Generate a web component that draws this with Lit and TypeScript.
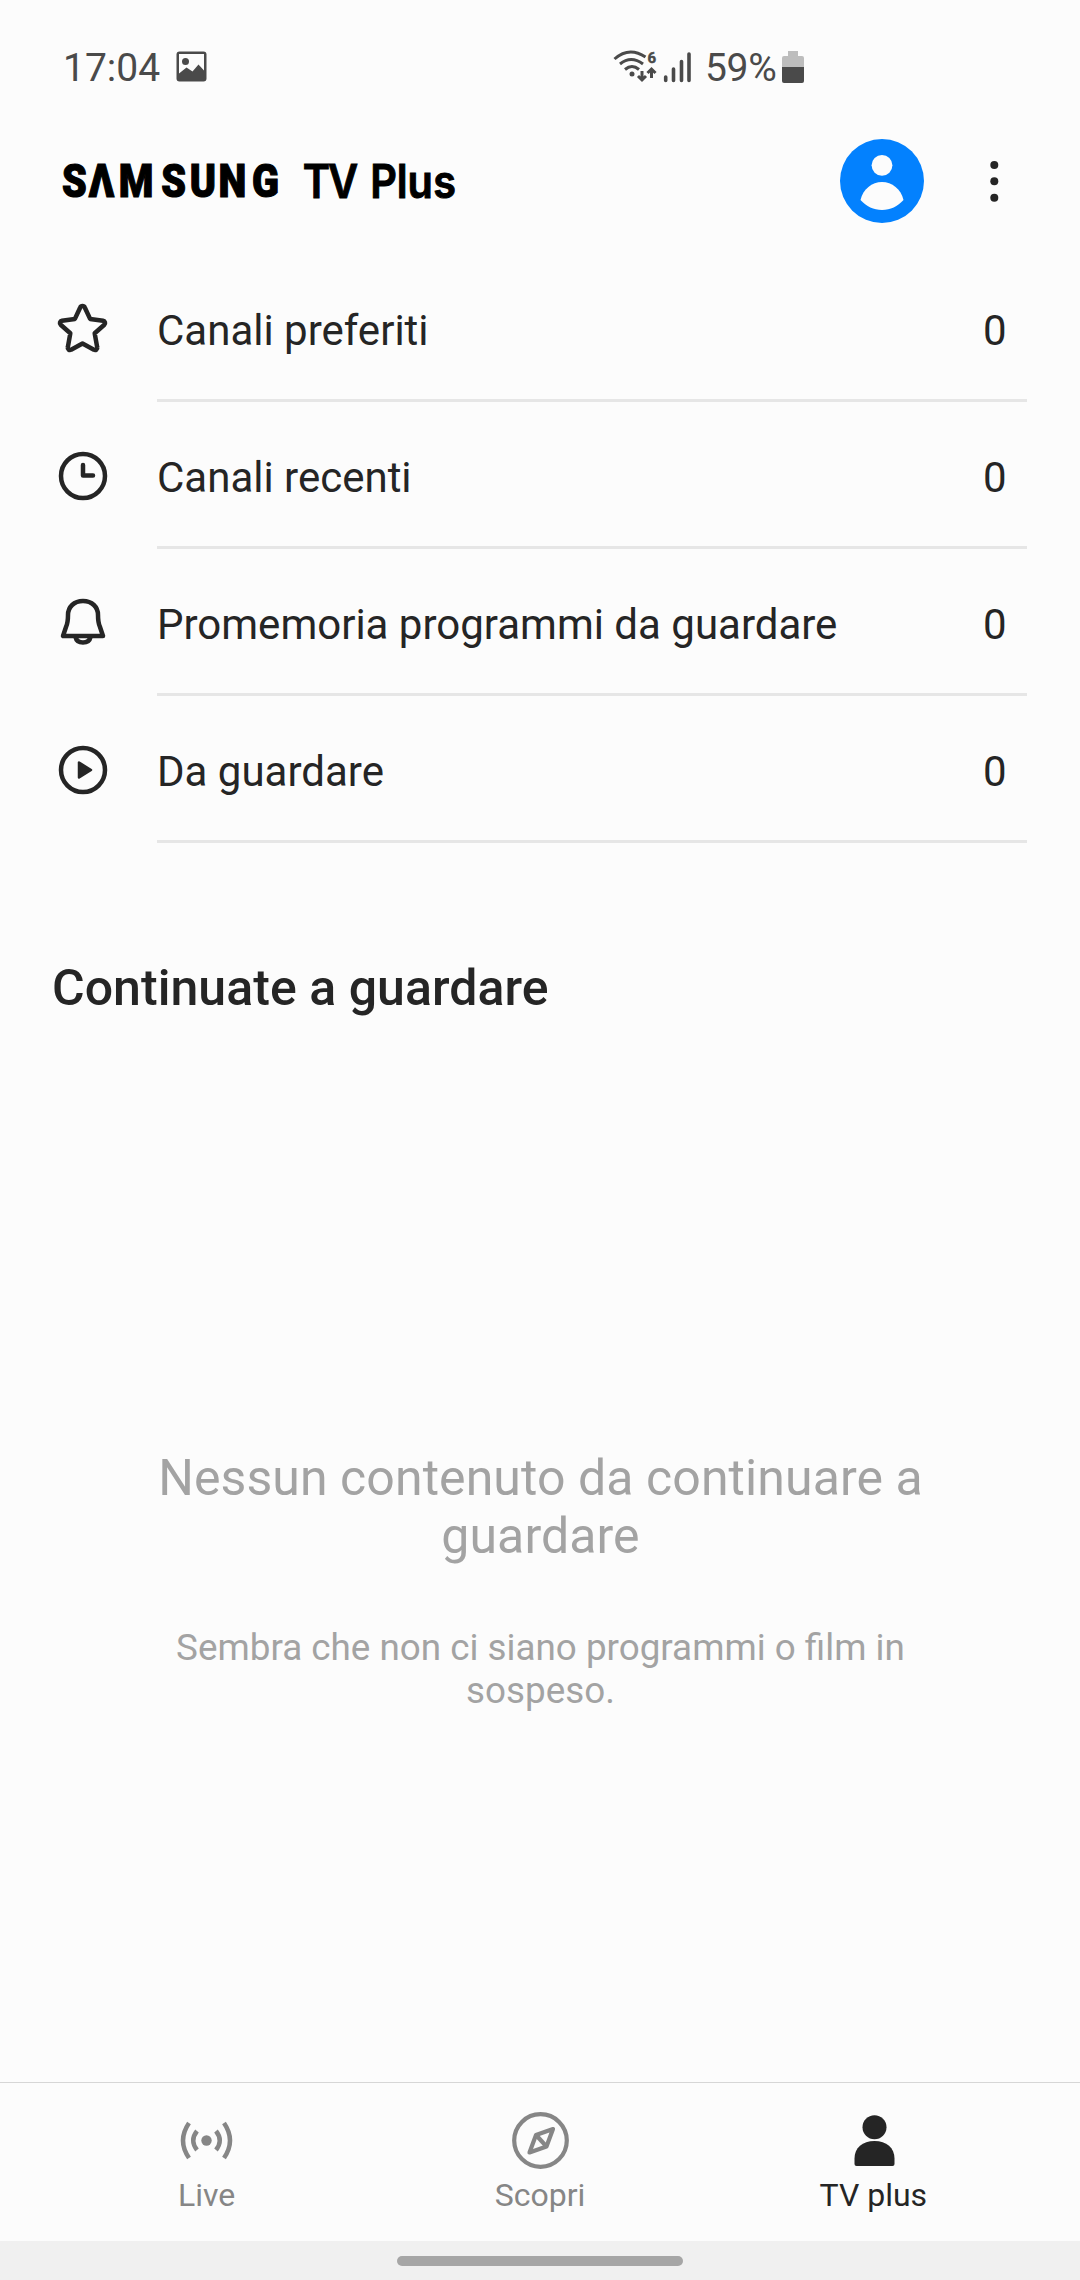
import { LitElement, html, css, svg } from "lit";
import { customElement } from "lit/decorators.js";

const star = svg`<path transform="translate(-.5 -1.500)" d="M26 4.500a2.500 2.500 0 0 0-2.300 1.500l-5.300 11.400-13 1.800a2.300 2.300 0 0 0-1.200 4l9.600 8.600-2.500 14a2.200 2.200 0 0 0 3.300 2.400L26 42l11.400 6.200a2.200 2.200 0 0 0 3.300-2.400l-2.500-14 9.600-8.600a2.300 2.300 0 0 0-1.200-4l-13-1.800L28.300 6a2.500 2.500 0 0 0-2.300-1.500z"/>`;
const clock = svg`<circle cx="26" cy="26" r="22"/><path d="M26 15v10.500h10" stroke-linecap="round"/>`;
const bell = svg`<path d="M26 4.500c-9 0-15 6-15 14 0 6-.3 8.500-2 12L6 39.500h40l-3-9c-1.700-3.500-2-6-2-12 0-8-6-14-15-14z" transform="translate(0 -.5)"/><path d="M18.500 40c.7 3.500 3.500 5.500 7.500 5.500s6.800-2 7.500-5.500"/>`;
const play = svg`<circle cx="26" cy="26" r="22"/><path class="solid" d="M22 18.500v15l12-7.500z"/>`;

const rows = [
  { icon: star, label: "Canali preferiti", count: 0 },
  { icon: clock, label: "Canali recenti", count: 0 },
  { icon: bell, label: "Promemoria programmi da guardare", count: 0 },
  { icon: play, label: "Da guardare", count: 0 },
];

const live = svg`<g fill="none" stroke="currentColor" stroke-width="4.500"><path d="M11 12Q-1 29.500 11 47"/><path d="M46 12Q58 29.500 46 47"/><path d="M19 20Q11.500 29.500 19 39"/><path d="M38 20Q45.500 29.500 38 39"/></g><circle cx="28.500" cy="29.500" r="5.200" fill="currentColor"/>`;
const compass = svg`<g fill="none" stroke="currentColor" stroke-width="4.200" stroke-linejoin="round"><circle cx="29.500" cy="29.500" r="26.300"/><path d="M42 18 25 24 18.500 41.500l17-6z"/><path d="m25 24 10.500 11.500"/></g>`;
const person = svg`<g fill="currentColor"><circle cx="30.500" cy="16.300" r="12"/><path d="M10.500 49v-1.500C10.500 37 18.500 30 30.500 30s20 7 20 17.500V53q0 2-2 2h-36q-2 0-2-2z"/></g>`;

const tabs = [
  { icon: live, label: "Live", active: false },
  { icon: compass, label: "Scopri", active: false },
  { icon: person, label: "TV plus", active: true },
];

@customElement("app-root")
export class AppRoot extends LitElement {
  static styles = css`
    :host { display: flex; flex-direction: column; height: 2280px; width: 1080px; background: #fcfcfc; color: #252525; font-family: Roboto, sans-serif; box-sizing: border-box; overflow: hidden; }
    svg { display: block; flex: none; }
    .status { display: flex; align-items: center; height: 134px; padding-left: 63px; box-sizing: border-box; color: #4a4a4a; font-size: 39px; line-height: 46px; }
    .time, .pct { padding-top: 1px; }
    .time { width: 112px; }
    .signals { margin-left: 404px; }
    .pct { margin-left: 14px; width: 77px; letter-spacing: -0.3px; }
    .header { display: flex; align-items: center; height: 94px; padding-left: 62px; }
    .avatar { margin-left: 380px; }
    .more { margin-left: 62px; }
    .list { padding: 27px 53px 0 57px; }
    .row { display: flex; height: 147px; }
    .row-icon { width: 100px; padding: 48px 0 0 0.4px; box-sizing: border-box; }
    .row-icon svg { fill: none; stroke: #252525; stroke-width: 4.5px; stroke-linejoin: round; }
    .row-icon svg .solid { fill: #252525; stroke-width: 2.5px; }
    .row-main { flex: 1; display: flex; justify-content: space-between; border-bottom: 3px solid #e6e6e6; padding: 51px 20.5px 0 0; font-size: 42px; line-height: 50px; }
    .title { margin: 116px 0 0 52px; font-size: 50px; line-height: 58px; font-weight: 500; letter-spacing: 0.05px; }
    .empty { flex: 1; padding: 432px 139px 0 140px; text-align: center; color: #a3a3a3; }
    .empty-title { font-size: 50px; line-height: 58px; letter-spacing: 0.08px; }
    .empty-text { margin-top: 61px; font-size: 36.8px; line-height: 43px; }
    .tabs { display: flex; height: 158px; padding: 0 40px; border-top: 1px solid #d6d6d6; }
    .tab { flex: 1; display: flex; flex-direction: column; align-items: center; padding-top: 28px; color: #868686; font-size: 32px; line-height: 38px; }
    .tab.active { color: #252525; }
    .tab-label { margin-top: 7px; }
    .gesture { height: 39px; display: flex; justify-content: center; align-items: center; background: #f0f0f0; }
    .pill { width: 286px; height: 10px; border-radius: 5px; background: #a6a6a6; }
  `;

  render() {
    return html`
      <div class="status">
        <span class="time">17:04</span>
        <svg width="34" height="32" viewBox="0 0 34 32"><path fill="#4a4a4a" fill-rule="evenodd" d="M4.500 .5h24q3 0 3 3v24q0 3-3 3h-24q-3 0-3-3v-24q0-3 3-3zM4 3v19.500l7.500-6 6 4 6-7 5.500 6V3zM10.500 7a3.500 3.500 0 1 1 0 7 3.500 3.500 0 0 1 0-7z"/></svg>
        <svg class="signals" width="78" height="36" viewBox="0 0 78 36">
          <g fill="none" stroke="#4a4a4a" stroke-width="3"><path d="M1.500 10Q16-3 32.500 8"/><path d="M7 15q11-9 23 0"/><path d="M12 20.500q7-6 14 0"/><path d="M29 22v9m-4-4 4 4 4-4M38.500 29v-9m-4 4 4-4 4 4"/></g>
          <circle cx="19" cy="25" r="2.500" fill="#4a4a4a"/>
          <text x="34.500" y="14" font-size="15" font-weight="700" fill="#4a4a4a" stroke="#4a4a4a" stroke-width=".5">6</text>
          <path d="M52.700 28v3.500M60.500 20v11.500M68.500 12.500v19M76 5v26.500" stroke="#4a4a4a" stroke-width="3.600" stroke-linecap="round"/>
        </svg>
        <span class="pct">59%</span>
        <svg width="22" height="34" viewBox="0 0 22 34"><path d="M6 1h10v5h4q2 0 2 2v9H0V8q0-2 2-2h4z" fill="#bdbdbd"/><path d="M0 17h22v14q0 2-2 2H2q-2 0-2-2z" fill="#4a4a4a"/></svg>
      </div>
      <div class="header">
        <svg class="logo" width="398" height="60" viewBox="0 0 398 60" fill="#000">
          <g transform="scale(.86 1)" font-size="46" font-weight="900" stroke="#000" stroke-width="1.200"><text x="0 31 66 115.500 148.500 182 221" y="46">SΛMSUNG</text></g>
          <g transform="scale(.9 1)" font-family="Inter, sans-serif" font-size="46" font-weight="600" stroke="#000" stroke-width="1"><text x="267.500 295.500 325 342.500 372 384 412.500" y="47">TV Plus</text></g>
        </svg>
        <svg class="avatar" width="84" height="84" viewBox="0 0 84 84"><circle cx="42" cy="42" r="42" fill="#0381fe"/><g fill="#fcfcfc"><circle cx="42" cy="26.300" r="10.400"/><path d="M20.500 61C23 50 32 43 42 43s19 7 21.500 18c-6 6.500-13 10-21.500 10s-15.500-3.500-21.500-10z"/></g></svg>
        <svg class="more" width="16" height="44" viewBox="0 0 16 44" fill="#252525"><circle cx="8.300" cy="6" r="4"/><circle cx="8.300" cy="22.300" r="4"/><circle cx="8.300" cy="38.700" r="4"/></svg>
      </div>
      <div class="list">
        ${rows.map((r) => html`<div class="row">
          <div class="row-icon"><svg width="52" height="52" viewBox="0 0 52 52">${r.icon}</svg></div>
          <div class="row-main"><span>${r.label}</span><span>${r.count}</span></div>
        </div>`)}
      </div>
      <div class="title">Continuate a guardare</div>
      <div class="empty">
        <div class="empty-title">Nessun contenuto da continuare a guardare</div>
        <div class="empty-text">Sembra che non ci siano programmi o film in sospeso.</div>
      </div>
      <div class="tabs">
        ${tabs.map((t) => html`<div class="tab ${t.active ? "active" : ""}">
          <svg width="58" height="58" viewBox="0 0 58 58">${t.icon}</svg>
          <span class="tab-label">${t.label}</span>
        </div>`)}
      </div>
      <div class="gesture"><div class="pill"></div></div>
    `;
  }
}
